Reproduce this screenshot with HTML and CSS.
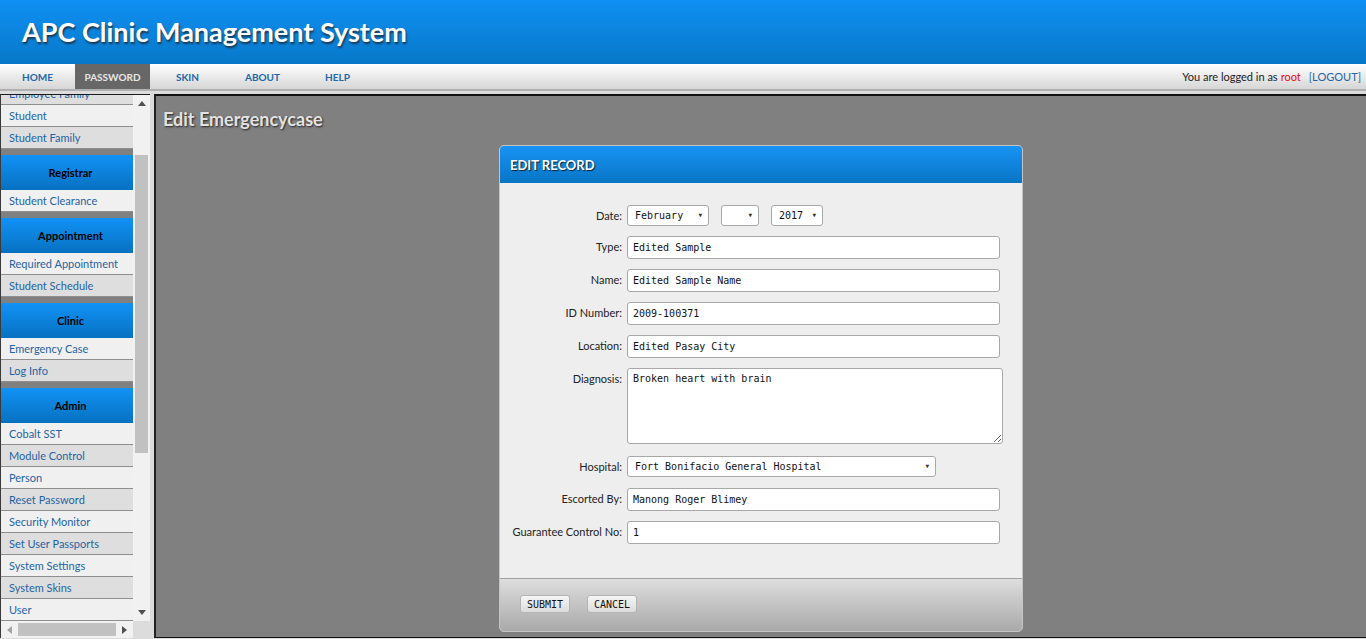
FILE: index.html
```html
<!DOCTYPE html>
<html>
<head>
<meta charset="utf-8">
<title>APC Clinic Management System</title>
<link rel="stylesheet" href="styles.css">
</head>
<body>
<div class="top">
  <header class="banner"><h1>APC Clinic Management System</h1></header>
  <nav class="nav">
    <ul class="tabs">
      <li><a href="#">HOME</a></li>
      <li class="active"><a href="#">PASSWORD</a></li>
      <li><a href="#">SKIN</a></li>
      <li><a href="#">ABOUT</a></li>
      <li><a href="#">HELP</a></li>
    </ul>
    <div class="login">You are logged in as <span class="user">root</span> <a href="#">[LOGOUT]</a></div>
  </nav>
</div>
<div class="frames">
  <aside class="side">
    <div class="side-view">
      <div class="side-menu">
        <div class="sec-gap"></div>
        <div class="sec-head">Human Resource</div>
        <a class="item" href="#">Employee</a>
        <a class="item alt" href="#">Employee Family</a>
        <a class="item" href="#">Student</a>
        <a class="item alt" href="#">Student Family</a>
        <div class="sec-gap"></div>
        <div class="sec-head">Registrar</div>
        <a class="item" href="#">Student Clearance</a>
        <div class="sec-gap"></div>
        <div class="sec-head">Appointment</div>
        <a class="item" href="#">Required Appointment</a>
        <a class="item alt" href="#">Student Schedule</a>
        <div class="sec-gap"></div>
        <div class="sec-head">Clinic</div>
        <a class="item" href="#">Emergency Case</a>
        <a class="item alt" href="#">Log Info</a>
        <div class="sec-gap"></div>
        <div class="sec-head">Admin</div>
        <a class="item" href="#">Cobalt SST</a>
        <a class="item alt" href="#">Module Control</a>
        <a class="item" href="#">Person</a>
        <a class="item alt" href="#">Reset Password</a>
        <a class="item" href="#">Security Monitor</a>
        <a class="item alt" href="#">Set User Passports</a>
        <a class="item" href="#">System Settings</a>
        <a class="item alt" href="#">System Skins</a>
        <a class="item" href="#">User</a>
        <a class="item alt" href="#">User Role</a>
        <div class="sec-gap"></div>
        <div class="sec-head">Reports</div>
        <a class="item" href="#">Monthly Report</a>
        <a class="item alt" href="#">Yearly Report</a>
      </div>
    </div>
    <div class="vbar">
      <span class="arrow"><svg width="8" height="5" viewBox="0 0 8 5"><path d="M0 5 L4 0 L8 5 Z" fill="#505050"/></svg></span>
      <div class="vtrack"><div class="vthumb"></div></div>
      <span class="arrow"><svg width="8" height="5" viewBox="0 0 8 5"><path d="M0 0 L8 0 L4 5 Z" fill="#505050"/></svg></span>
    </div>
    <div class="hbar">
      <span class="arrow"><svg width="5" height="8" viewBox="0 0 5 8"><path d="M5 0 L5 8 L0 4 Z" fill="#a3a3a3"/></svg></span>
      <div class="htrack"><div class="hthumb"></div></div>
      <span class="arrow"><svg width="5" height="8" viewBox="0 0 5 8"><path d="M0 0 L5 4 L0 8 Z" fill="#505050"/></svg></span>
    </div>
    <div class="corner"></div>
  </aside>
  <main class="main">
    <h2 class="page-title">Edit Emergencycase</h2>
    <section class="dialog">
      <div class="dlg-head">EDIT RECORD</div>
      <form class="dlg-body">
        <label class="lbl">Date:</label>
        <div class="date-row">
          <span class="sel w-month">February</span>
          <span class="sel w-day"></span>
          <span class="sel w-year">2017</span>
        </div>
        <label class="lbl">Type:</label>
        <input class="txt" type="text" value="Edited Sample">
        <label class="lbl">Name:</label>
        <input class="txt" type="text" value="Edited Sample Name">
        <label class="lbl">ID Number:</label>
        <input class="txt" type="text" value="2009-100371">
        <label class="lbl">Location:</label>
        <input class="txt" type="text" value="Edited Pasay City">
        <label class="lbl">Diagnosis:</label>
        <textarea class="area">Broken heart with brain</textarea>
        <label class="lbl">Hospital:</label>
        <div class="hosp-row"><span class="sel w-hosp">Fort Bonifacio General Hospital</span></div>
        <label class="lbl">Escorted By:</label>
        <input class="txt" type="text" value="Manong Roger Blimey">
        <label class="lbl">Guarantee Control No:</label>
        <input class="txt" type="text" value="1">
      </form>
      <div class="dlg-foot">
        <button class="btn" type="button">SUBMIT</button>
        <button class="btn" type="button">CANCEL</button>
      </div>
    </section>
  </main>
</div>
</body>
</html>
```

FILE: styles.css
```css
* { box-sizing: border-box; }
html, body { margin: 0; padding: 0; }
body {
  width: 1366px;
  height: 639px;
  overflow: hidden;
  font-family: Lato, "Open Sans", "Liberation Sans", sans-serif;
  background: #dcdcdc;
}
a { text-decoration: none; }

/* ---------- top frame ---------- */
.banner {
  height: 64px;
  background: linear-gradient(#0f90f3, #0778c8);
  padding-left: 22px;
  display: flex;
  align-items: center;
}
.banner h1 {
  margin: 0;
  color: #fff;
  font-size: 27px;
  font-weight: 700;
  line-height: 32px;
  text-shadow: 1px 2px 2px #1d3550;
}
.nav {
  height: 27px;
  background: linear-gradient(#ffffff, #d6d6d6);
  border-bottom: 2px solid #b0b0b0;
  display: flex;
  justify-content: space-between;
  align-items: stretch;
}
.tabs {
  list-style: none;
  margin: 0;
  padding: 0;
  display: flex;
}
.tabs li {
  width: 75px;
  display: flex;
  align-items: center;
  justify-content: center;
}
.tabs a {
  font-size: 10px;
  font-weight: 700;
  color: #1f67a8;
}
.tabs li.active { background: #676767; }
.tabs li.active a { color: #e6e6e6; }
.login {
  font-size: 11px;
  color: #222;
  padding-right: 5px;
  display: flex;
  align-items: center;
  gap: 3px;
}
.login .user { color: #e01010; margin-right: 5px; }
.login a { color: #1f67a8; }

/* ---------- frames ---------- */
.frames {
  height: 548px;
  padding-top: 3px;
  padding-bottom: 1px;
  display: flex;
  gap: 4px;
}

/* sidebar */
.side {
  width: 150px;
  border-top: 1px solid #1a1a1a;
  border-left: 1px solid #3a3a3a;
  display: grid;
  grid-template-columns: 1fr 17px;
  grid-template-rows: 1fr 17px;
  background: #f1f1f1;
}
.side-view {
  overflow: hidden;
  background: #f0f0f0;
}
.side-menu {
  width: 141px;
  margin-top: -75px;
  margin-left: -1px;
}
.sec-gap { height: 6px; background: #808080; }
.sec-head {
  height: 35px;
  background: linear-gradient(#1192f6, #0771c0);
  color: #000;
  font-size: 11px;
  font-weight: 700;
  display: flex;
  align-items: center;
  justify-content: center;
}
.item {
  display: flex;
  align-items: center;
  height: 22px;
  padding-left: 9px;
  font-size: 11px;
  color: #1f63a3;
  background: #f0f0f0;
  border-bottom: 1px solid #8f8f8f;
  white-space: nowrap;
}
.item.alt { background: #dedede; }

.vbar {
  background: #f1f1f1;
  display: flex;
  flex-direction: column;
}
.arrow {
  width: 17px;
  height: 17px;
  display: flex;
  align-items: center;
  justify-content: center;
  flex: none;
}
.vtrack { flex: 1; padding: 0 2px; }
.vthumb {
  margin-top: 43px;
  height: 298px;
  background: #c1c1c1;
}
.hbar {
  background: #f1f1f1;
  display: flex;
}
.htrack { flex: 1; padding: 2px 0; }
.hthumb {
  width: 98px;
  height: 13px;
  background: #c1c1c1;
}
.corner { background: #dcdcdc; }

/* main */
.main {
  flex: 1;
  background: #808080;
  border-top: 2px solid #111;
  border-left: 2px solid #222;
  border-bottom: 1px solid #111;
  padding-top: 12px;
}
.page-title {
  margin: 0 0 15px 7px;
  height: 22px;
  line-height: 22px;
  font-size: 18px;
  font-weight: 700;
  color: #e2e2e2;
  text-shadow: 1px 1px 2px #222;
}
.dialog {
  width: 524px;
  margin: 0 auto;
  border: 1px solid #c4c4c4;
  border-radius: 5px;
  overflow: hidden;
  background: #eeeeee;
}
.dlg-head {
  height: 37px;
  background: linear-gradient(#1893f5, #0875c4);
  color: #fff;
  font-size: 13px;
  font-weight: 700;
  padding-left: 10px;
  display: flex;
  align-items: center;
  text-shadow: 1px 1px 1px #123;
}
.dlg-body {
  margin: 0;
  padding: 22px 0 34px 5px;
  display: grid;
  grid-template-columns: 117px 1fr;
  column-gap: 5px;
  row-gap: 10px;
  align-items: start;
}
.lbl {
  text-align: right;
  font-size: 11px;
  line-height: 21px;
  color: #222;
  white-space: nowrap;
}
.txt {
  display: block;
  width: 373px;
  height: 23px;
  margin: 0;
  border: 1px solid #a8a8a8;
  border-radius: 3px;
  padding: 0 5px;
  font-family: "DejaVu Sans Mono", monospace;
  font-size: 10px;
  color: #111;
  background: #fff;
}
.area {
  display: block;
  width: 376px;
  height: 76px;
  margin: 0 0 2px 0;
  border: 1px solid #a8a8a8;
  border-radius: 3px;
  padding: 4px 5px;
  font-family: "DejaVu Sans Mono", monospace;
  font-size: 10px;
  color: #111;
  background: #fff;
  resize: both;
}
.date-row { display: flex; gap: 12px; }
.hosp-row { display: flex; height: 22px; }
.sel {
  position: relative;
  display: inline-flex;
  align-items: center;
  height: 21px;
  border: 1px solid #a8a8a8;
  border-radius: 3px;
  background: #fff;
  padding-left: 7px;
  font-family: "DejaVu Sans Mono", monospace;
  font-size: 10px;
  color: #111;
}
.sel::after {
  content: "\25BC";
  position: absolute;
  right: 6px;
  top: 5px;
  font-size: 6px;
  color: #333;
}
.w-month { width: 82px; }
.w-day { width: 38px; }
.w-year { width: 52px; }
.w-hosp { width: 309px; }
.dlg-foot {
  height: 53px;
  border-top: 1px solid #a0a0a0;
  background: linear-gradient(#dedede, #a9a9a9);
  padding: 16px 0 0 20px;
  display: flex;
  align-items: flex-start;
  gap: 17px;
}
.btn {
  width: 50px;
  height: 18px;
  padding: 0;
  border: 1px solid #b5b5b5;
  border-radius: 3px;
  background: linear-gradient(#f6f6f6, #dcdcdc);
  font-family: "DejaVu Sans Mono", monospace;
  font-size: 10px;
  color: #111;
}
```
